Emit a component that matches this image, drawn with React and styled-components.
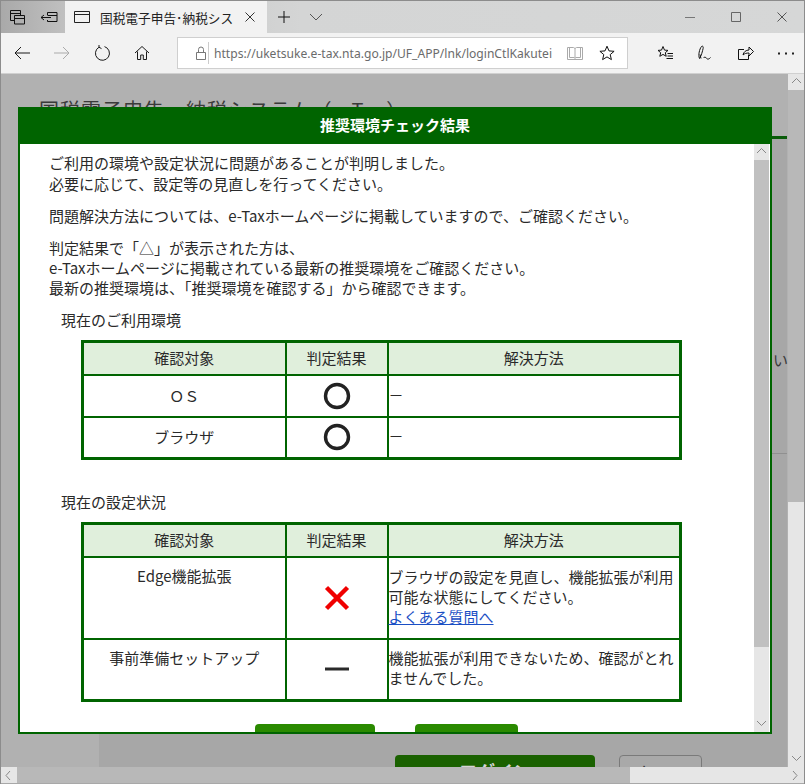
import React from "react";
import styled, { createGlobalStyle } from "styled-components";

const GlobalStyle = createGlobalStyle`
  html, body {
    margin: 0;
    padding: 0;
    overflow: hidden;
    background: #b1b1b1;
  }
  * {
    box-sizing: border-box;
  }
`;

const jp = `"Noto Sans CJK JP", "Noto Sans", "Liberation Sans", sans-serif`;

const Icon = ({ w = 20, h = 20, color = "#1a1a1a", children }) => (
  <svg width={w} height={h} viewBox={`0 0 ${w} ${h}`} fill="none" stroke={color} strokeWidth="1">
    {children}
  </svg>
);

const rows1 = [
  { target: "ＯＳ", mark: "o", fix: ["－"] },
  { target: "ブラウザ", mark: "o", fix: ["－"] },
];

const Mark = ({ type }) => {
  if (type === "o") {
    return (
      <svg width="28" height="28" viewBox="0 0 28 28">
        <circle cx="14" cy="14" r="11.5" fill="none" stroke="#222" strokeWidth="3.4" />
      </svg>
    );
  }
  if (type === "x") {
    return (
      <svg width="26" height="26" viewBox="0 0 26 26">
        <path d="M2.5 2.5 L23.5 23.5 M23.5 2.5 L2.5 23.5" stroke="#f00000" strokeWidth="4.4" />
      </svg>
    );
  }
  return (
    <svg width="26" height="26" viewBox="0 0 26 26">
      <path d="M1 13 H25" stroke="#2a2a2a" strokeWidth="3" />
    </svg>
  );
};

const Chevron = ({ dir }) => {
  const paths = {
    up: "M1 6l4.5-4.5L10 6",
    down: "M1 2l4.5 4.5L10 2",
    left: "M6 1L2 5.5 6 10",
    right: "M2 1l4 4.5L2 10",
  };
  return (
    <svg width="11" height="11" viewBox="0 0 11 11" fill="none" stroke="#888" strokeWidth="1">
      <path d={paths[dir]} />
    </svg>
  );
};

const TableHead = () => (
  <>
    <colgroup>
      <col style={{ width: 203 }} />
      <col style={{ width: 102 }} />
      <col />
    </colgroup>
    <thead>
      <tr>
        <Th>確認対象</Th>
        <Th>判定結果</Th>
        <Th>解決方法</Th>
      </tr>
    </thead>
  </>
);

const App = () => (
  <Window>
    <GlobalStyle />
    <TabBar>
      <TabTools>
        <ToolSlot>
          <Icon color="#111">
            <path d="M13.5 8V3.5h-10v10H7M3.5 6.5h10M7.5 8.5h10V17h-10zM7.5 11.5h10" />
          </Icon>
        </ToolSlot>
        <ToolSlot>
          <Icon color="#111">
            <path d="M8.5 8V5.500h9.500v9H8.500V13M8.500 8.500h9.500M2 10.500h10M2 10.500l3-2.500M2 10.500l3 2.500" />
          </Icon>
        </ToolSlot>
      </TabTools>
      <ActiveTab>
        <Icon w={16} h={14} color="#222">
          <path d="M.5 1.500h15v11H.5zM.5 4.500h15" />
        </Icon>
        <TabTitle>国税電子申告･納税システム</TabTitle>
        <Icon w={10} h={10} color="#333">
          <path d="M.5.5l9 9M9.500.5l-9 9" />
        </Icon>
      </ActiveTab>
      <NewTab>
        <Icon w={12} h={12} color="#111">
          <path d="M6 0v12M0 6h12" />
        </Icon>
        <Icon w={14} h={8} color="#555">
          <path d="M1 1l6 6 6-6" />
        </Icon>
      </NewTab>
      <WinControls>
        <Icon w={10} h={10} color="#777">
          <path d="M0 5.500h10" />
        </Icon>
        <Icon w={10} h={10} color="#666">
          <path d="M.5.5h9v9h-9z" />
        </Icon>
        <Icon w={10} h={10} color="#555">
          <path d="M.5.5l9 9M9.500.5l-9 9" />
        </Icon>
      </WinControls>
    </TabBar>
    <ToolBar>
      <NavGroup>
        <Icon w={16} h={14}>
          <path d="M1 7h15M1 7l6-6M1 7l6 6" />
        </Icon>
        <Icon w={16} h={14} color="#aaa">
          <path d="M0 7h15M15 7L9 1M15 7l-6 6" />
        </Icon>
        <Icon w={16} h={16}>
          <path d="M5 2.200A7 7 0 1 0 10.500 1.600M5 2.200V0M5 2.200L7.500 3.600" />
        </Icon>
        <Icon w={16} h={16}>
          <path d="M1 8l7-6.500L15 8M3.500 6.500v8h3.200V10h2.600v4.500h3.200v-8" />
        </Icon>
      </NavGroup>
      <AddressBar>
        <LockSlot>
          <Icon w={12} h={14} color="#777">
            <path d="M1.500 6.500h9v7h-9zM3.500 6.500V3.500a2.500 2.500 0 0 1 5 0v3" />
          </Icon>
        </LockSlot>
        <Url>https://uketsuke.e-tax.nta.go.jp/UF_APP/lnk/loginCtlKakutei</Url>
        <Icon w={16} h={14} color="#aaa">
          <path d="M.5 1.500h6l1.500 1 1.500-1h6v12h-15zM8 2.500v11M2.500 1.500v10h5M13.500 1.500v10h-5" />
        </Icon>
        <Icon w={16} h={16} color="#111">
          <path d="M8 1.200l2 4.700 5.100.4-3.900 3.300 1.200 5-4.400-2.700-4.400 2.700 1.200-5L.9 6.300 6 5.900z" />
        </Icon>
      </AddressBar>
      <ActionGroup>
        <Icon w={16} h={16} color="#111">
          <path d="M6 1.500l1.500 3.600 3.500.3-2.700 2.300.9 3.600L6 9.400l-3.200 1.900.9-3.600L1 5.400l3.500-.3zM10.500 8.500H16M10.500 11H16M9.500 13.500H16" />
        </Icon>
        <Icon w={16} h={16} color="#111">
          <path d="M2.500 13.500C1 10 2.500 4 4.500 1.500c1.200-1 2 .2 1.600 2C5.500 6 4.500 10.500 2.500 13.500zM3 9.500l1 4M6.500 13c1-1.500 2-1 3 .3s2.500 1 4-.8" />
        </Icon>
        <Icon w={17} h={16} color="#111">
          <path d="M7 4.500H1.500v10h10V10M6 10c.5-3 3-5 6-5V2l4.500 4.500L12 11V8c-2.500 0-4.500.5-6 2z" />
        </Icon>
        <svg width="16" height="3" viewBox="0 0 16 3">
          <path d="M0 .5h2v2H0zM7 .5h2v2H7zM14 .5h2v2h-2z" fill="#222" />
        </svg>
      </ActionGroup>
    </ToolBar>
    <Viewport>
      <PageTitle>国税電子申告・納税システム（e-Tax）</PageTitle>
      <PageBand />
      <PageRule />
      <PageText>ください。</PageText>
      <LoginRow>
        <LoginButton>ログイン</LoginButton>
        <ClearButton>クリア</ClearButton>
      </LoginRow>
      <PageVScroll>
        <Arrow><Chevron dir="up" /></Arrow>
        <VThumb $height={412} $color="#b8b8b8" />
        <VTrack $color="#e6e6e6" />
        <Arrow><Chevron dir="down" /></Arrow>
      </PageVScroll>
      <Dialog>
        <DialogHead>推奨環境チェック結果</DialogHead>
        <DialogBody>
          <Content>
            <Para>
              ご利用の環境や設定状況に問題があることが判明しました。<br />
              必要に応じて、設定等の見直しを行ってください。
            </Para>
            <Para $gap={12}>問題解決方法については、e-Taxホームページに掲載していますので、ご確認ください。</Para>
            <Para $tight>
              判定結果で「△」が表示された方は、<br />
              e-Taxホームページに掲載されている最新の推奨環境をご確認ください。<br />
              最新の推奨環境は、「推奨環境を確認する」から確認できます。
            </Para>
            <SectionLabel $top={8} $bottom={10}>現在のご利用環境</SectionLabel>
            <ResultTable>
              <TableHead />
              <tbody>
                {rows1.map((r) => (
                  <tr key={r.target}>
                    <TargetCell $h={42} $center>{r.target}</TargetCell>
                    <MarkCell><Mark type={r.mark} /></MarkCell>
                    <FixCell>{r.fix}</FixCell>
                  </tr>
                ))}
              </tbody>
            </ResultTable>
            <SectionLabel $top={31} $bottom={10}>現在の設定状況</SectionLabel>
            <ResultTable>
              <TableHead />
              <tbody>
                <tr>
                  <TargetCell $h={82}>Edge機能拡張</TargetCell>
                  <MarkCell><Mark type="x" /></MarkCell>
                  <FixCell>
                    ブラウザの設定を見直し、機能拡張が利用可能な状態にしてください。<br />
                    <FaqLink href="#faq">よくある質問へ</FaqLink>
                  </FixCell>
                </tr>
                <tr>
                  <TargetCell $h={62}>事前準備セットアップ</TargetCell>
                  <MarkCell><Mark type="dash" /></MarkCell>
                  <FixCell>機能拡張が利用できないため、確認がとれませんでした。</FixCell>
                </tr>
              </tbody>
            </ResultTable>
            <ButtonRow>
              <GreenButton $w={120} />
              <GreenButton $w={103} />
            </ButtonRow>
          </Content>
          <DialogScroll>
            <Arrow><Chevron dir="up" /></Arrow>
            <VThumb $height={487} $color="#c0c0c0" />
            <VTrack $color="#e6e6e6" />
            <Arrow><Chevron dir="down" /></Arrow>
          </DialogScroll>
        </DialogBody>
      </Dialog>
    </Viewport>
    <HScroll>
      <HArrow><Chevron dir="left" /></HArrow>
      <HThumb />
      <HTrack />
      <HArrow><Chevron dir="right" /></HArrow>
    </HScroll>
  </Window>
);

const Window = styled.div`
  width: 805px;
  height: 784px;
  display: flex;
  flex-direction: column;
  overflow: hidden;
  border: 1px solid #8c8c8c;
  border-bottom: none;
  font-family: ${jp};
`;

const TabBar = styled.div`
  height: 32px;
  display: flex;
  align-items: stretch;
  background: linear-gradient(90deg, #a9a9a9 0, #c0c0c0 64px, #d4d5d5 300px, #d6d7d7 100%);
`;

const TabTools = styled.div`
  display: flex;
  width: 64px;
`;

const ToolSlot = styled.div`
  width: 32px;
  display: flex;
  align-items: center;
  justify-content: center;
`;

const ActiveTab = styled.div`
  width: 202px;
  background: #f2f2f2;
  display: flex;
  align-items: center;
  padding: 0 12px 0 9px;
  gap: 10px;
`;

const TabTitle = styled.div`
  width: 133px;
  font-size: 12.7px;
  color: #222;
  white-space: nowrap;
  overflow: hidden;
  margin-right: 2px;
`;

const NewTab = styled.div`
  display: flex;
  align-items: center;
  gap: 19px;
  padding-left: 11px;
`;

const WinControls = styled.div`
  margin-left: auto;
  display: flex;
  align-items: center;
  gap: 36px;
  padding-right: 17px;
`;

const ToolBar = styled.div`
  height: 41px;
  background: #f2f2f2;
  border-bottom: 1px solid #d0d0d0;
  display: flex;
  align-items: center;
`;

const NavGroup = styled.div`
  width: 176px;
  padding-left: 13px;
  display: flex;
  align-items: center;
  gap: 24px;
`;

const AddressBar = styled.div`
  width: 451px;
  height: 32px;
  background: #fff;
  border: 1px solid #cfcfcf;
  display: flex;
  align-items: center;
  padding-right: 12px;
  svg:last-child {
    margin-left: 16px;
  }
`;

const LockSlot = styled.div`
  width: 31px;
  height: 22px;
  border-right: 1px solid #ccc;
  display: flex;
  align-items: center;
  justify-content: center;
`;

const Url = styled.div`
  flex: 1;
  padding-left: 5px;
  font-family: "Noto Sans", "Liberation Sans", sans-serif;
  font-size: 12.1px;
  color: #6b6b6b;
  white-space: nowrap;
  overflow: hidden;
`;

const ActionGroup = styled.div`
  flex: 1;
  display: flex;
  align-items: center;
  gap: 24px;
  padding-left: 29px;
`;

const Viewport = styled.div`
  position: relative;
  flex: 1;
  min-height: 0;
  background: #b1b1b1;
  overflow: hidden;
`;

const PageTitle = styled.div`
  position: absolute;
  left: 38px;
  top: 20px;
  height: 13px;
  overflow: hidden;
  font-size: 20px;
  line-height: 32px;
  letter-spacing: 1px;
  color: #3a3a3a;
  white-space: nowrap;
`;

const PageBand = styled.div`
  position: absolute;
  left: 98px;
  right: 17px;
  top: 62px;
  bottom: 0;
  background: #a7a7a7;
  border-top: 3px solid #0a5c0a;
`;

const PageRule = styled.div`
  position: absolute;
  left: 771px;
  right: 17px;
  top: 379px;
  height: 1px;
  background: #909090;
`;

const PageText = styled.div`
  position: absolute;
  left: 771px;
  width: 16px;
  top: 276px;
  direction: rtl;
  overflow: hidden;
  white-space: nowrap;
  font-size: 15px;
  line-height: 20px;
  color: #3a3a3a;
`;

const LoginRow = styled.div`
  position: absolute;
  left: 394px;
  top: 681px;
  display: flex;
  gap: 24px;
`;

const LoginButton = styled.div`
  width: 200px;
  height: 44px;
  border-radius: 4px 4px 0 0;
  background: #1a6100;
  color: #d4d4d4;
  font-size: 18px;
  font-weight: 700;
  text-align: center;
  line-height: 33px;
`;

const ClearButton = styled.div`
  width: 83px;
  height: 44px;
  border-radius: 4px 4px 0 0;
  border: 1px solid #7a7a7a;
  background: #a9a9a9;
  color: #333;
  font-size: 16px;
  text-align: center;
  line-height: 32px;
`;

const PageVScroll = styled.div`
  position: absolute;
  right: 0;
  top: 0;
  bottom: 0;
  width: 16px;
  display: flex;
  flex-direction: column;
  background: #e6e6e6;
`;

const Arrow = styled.div`
  height: 16px;
  flex: none;
  display: flex;
  align-items: center;
  justify-content: center;
  background: #e6e6e6;
`;

const VThumb = styled.div`
  flex: none;
  height: ${(p) => p.$height}px;
  background: ${(p) => p.$color};
`;

const VTrack = styled.div`
  flex: 1;
  background: ${(p) => p.$color};
`;

const Dialog = styled.div`
  position: absolute;
  left: 17px;
  top: 33px;
  width: 754px;
  height: 627px;
  border: 2px solid #006400;
  border-top: none;
  display: flex;
  flex-direction: column;
  background: #fff;
`;

const DialogHead = styled.div`
  height: 37px;
  flex: none;
  margin: 0 -2px;
  background: #006400;
  color: #fff;
  font-size: 15px;
  font-weight: 700;
  text-align: center;
  line-height: 36px;
`;

const DialogBody = styled.div`
  flex: 1;
  min-height: 0;
  display: flex;
  background: #fff;
`;

const Content = styled.div`
  flex: 1;
  min-width: 0;
  overflow: hidden;
  padding: 8px 0 0 29px;
  font-size: 15px;
  color: #2a2a2a;
  line-height: 21px;
`;

const DialogScroll = styled.div`
  width: 15px;
  flex: none;
  margin-right: 1px;
  display: flex;
  flex-direction: column;
`;

const Para = styled.p`
  margin: 0 0 ${(p) => p.$gap || 11}px;
  line-height: ${(p) => (p.$tight ? 20 : 21)}px;
`;

const SectionLabel = styled.div`
  margin: ${(p) => p.$top}px 0 ${(p) => p.$bottom}px 12px;
`;

const ResultTable = styled.table`
  margin-left: 32px;
  width: 601px;
  border-collapse: collapse;
  table-layout: fixed;
  border: 3px solid #006400;
  font-size: 15px;
  line-height: 20px;
`;

const Th = styled.th`
  height: 33px;
  padding: 0;
  background: #e0efdc;
  border: 2px solid #006400;
  font-weight: 400;
  text-align: center;
`;

const TargetCell = styled.td`
  height: ${(p) => p.$h}px;
  padding: ${(p) => (p.$center ? 0 : "8px 0 0")};
  border: 2px solid #006400;
  text-align: center;
  vertical-align: ${(p) => (p.$center ? "middle" : "top")};
`;

const MarkCell = styled.td`
  padding: 0;
  border: 2px solid #006400;
  text-align: center;
  vertical-align: middle;
  svg {
    display: block;
    margin: 0 auto;
  }
`;

const FixCell = styled.td`
  padding: 0 0 2px;
  border: 2px solid #006400;
  vertical-align: middle;
`;

const FaqLink = styled.a`
  color: #1a4fc4;
  text-decoration: underline;
`;

const ButtonRow = styled.div`
  display: flex;
  gap: 40px;
  margin: 22px 0 0 206px;
`;

const GreenButton = styled.div`
  width: ${(p) => p.$w}px;
  height: 44px;
  border-radius: 4px 4px 0 0;
  background: #2a8a00;
`;

const HScroll = styled.div`
  height: 17px;
  flex: none;
  display: flex;
  background: #e6e6e6;
  border-bottom: 1px solid #a8a8a8;
`;

const HArrow = styled.div`
  width: 16px;
  display: flex;
  align-items: center;
  justify-content: center;
`;

const HThumb = styled.div`
  width: 613px;
  background: #b8b8b8;
`;

const HTrack = styled.div`
  flex: 1;
`;

export default App;
